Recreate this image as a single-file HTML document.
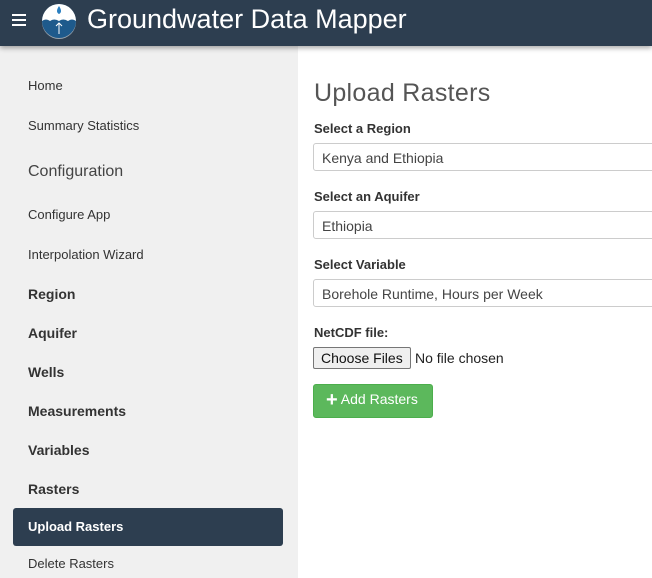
<!DOCTYPE html>
<html><head><style>
*{box-sizing:border-box;margin:0;padding:0}
body{width:652px;height:578px;overflow:hidden;font-family:"Liberation Sans",Arial,sans-serif;background:#fff;position:relative}
.hdr{position:absolute;left:0;top:0;width:652px;height:46px;background:#2d3e50;box-shadow:0 2px 5px rgba(0,0,0,.35);z-index:2}
.hdr .t{position:absolute;left:87px;top:4px;color:#fff;font-size:27px}
.hdr .m{position:absolute;left:12px;top:14px;width:14px}
.hdr .m i{display:block;height:2px;background:#fff;margin-bottom:3px}
.sb{position:absolute;left:0;top:46px;width:298px;height:532px;background:#f0f0f0}
.sb div{position:absolute;left:28px;font-size:13px;color:#333}
.sb .b{font-weight:bold;font-size:14px}
.act{position:absolute;left:13px;top:508px;width:270px;height:38px;background:#2d3e50;border-radius:3px}
h1{position:absolute;left:314px;top:79px;font-size:25px;font-weight:normal;color:#555;letter-spacing:.3px}
.lbl{position:absolute;left:314px;font-size:13px;font-weight:bold;color:#333}
.sel{position:absolute;left:313px;width:345px;height:28px;border:1px solid #ccc;border-radius:3px;font-size:14px;color:#444;padding:6px 8px}
.cf{position:absolute;left:313px;top:347px;width:98px;height:22px;border:1px solid #767676;border-radius:2px;background:#efefef;font-size:14px;padding:2px 7px;color:#111}
.nf{position:absolute;left:415px;top:350px;font-size:14px;color:#222}
.btn{position:absolute;left:313px;top:384px;width:120px;height:34px;background:#5cb85c;border:1px solid #4cae4c;border-radius:3px;color:#fff;font-size:14px;padding:6px 0 0 12px}
</style></head><body>
<div class="hdr"><div class="m"><i></i><i></i><i></i></div>
<svg style="position:absolute;left:41px;top:3px" width="36" height="38" viewBox="0 0 36 38"><circle cx="18" cy="19" r="17" fill="#9aa4ad"/><circle cx="18" cy="18" r="17" fill="#1e5a8c"/><path d="M1 18 A17 17 0 0 1 35 18 Q31 15 27 18 Q22 15 18 18 Q13 15 9 18 Q5 15 1 18Z" fill="#fff"/><path d="M18 3 Q14 9 18 11 Q22 9 18 3Z" fill="#2a7fc0"/><path d="M18 31 V20 M15 23 L18 20 L21 23" stroke="#fff" stroke-width="1" fill="none"/></svg>
<div class="t">Groundwater Data Mapper</div></div>
<div class="sb">
<div style="top:32px">Home</div>
<div style="top:72px">Summary Statistics</div>
<div style="top:117px;font-size:16px;color:#444">Configuration</div>
<div style="top:161px">Configure App</div>
<div style="top:201px">Interpolation Wizard</div>
<div class="b" style="top:240px">Region</div>
<div class="b" style="top:279px">Aquifer</div>
<div class="b" style="top:318px">Wells</div>
<div class="b" style="top:357px">Measurements</div>
<div class="b" style="top:396px">Variables</div>
<div class="b" style="top:435px">Rasters</div>
<div style="top:510px">Delete Rasters</div>
</div>
<div class="act"><span style="position:absolute;left:15px;top:11px;color:#fff;font-size:13px;font-weight:bold">Upload Rasters</span></div>
<h1>Upload Rasters</h1>
<div class="lbl" style="top:121px">Select a Region</div>
<div class="sel" style="top:143px">Kenya and Ethiopia</div>
<div class="lbl" style="top:189px">Select an Aquifer</div>
<div class="sel" style="top:211px">Ethiopia</div>
<div class="lbl" style="top:257px">Select Variable</div>
<div class="sel" style="top:279px">Borehole Runtime, Hours per Week</div>
<div class="lbl" style="top:325px">NetCDF file:</div>
<div class="cf">Choose Files</div><div class="nf">No file chosen</div>
<div class="btn"><b style="font-size:20px;line-height:18px;vertical-align:-2px">+</b> Add Rasters</div>
</body></html>
